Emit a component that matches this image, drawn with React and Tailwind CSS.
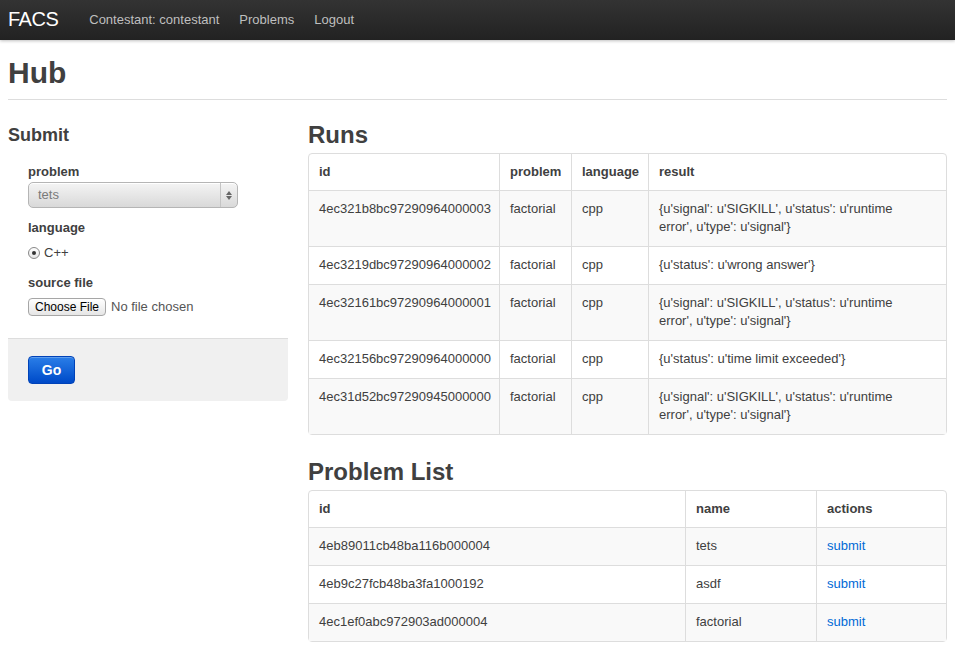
const runs = [
  ["4ec321b8bc97290964000003", "factorial", "cpp", "{u'signal': u'SIGKILL', u'status': u'runtime error', u'type': u'signal'}"],
  ["4ec3219dbc97290964000002", "factorial", "cpp", "{u'status': u'wrong answer'}"],
  ["4ec32161bc97290964000001", "factorial", "cpp", "{u'signal': u'SIGKILL', u'status': u'runtime error', u'type': u'signal'}"],
  ["4ec32156bc97290964000000", "factorial", "cpp", "{u'status': u'time limit exceeded'}"],
  ["4ec31d52bc97290945000000", "factorial", "cpp", "{u'signal': u'SIGKILL', u'status': u'runtime error', u'type': u'signal'}"],
];

const problems = [
  ["4eb89011cb48ba116b000004", "tets"],
  ["4eb9c27fcb48ba3fa1000192", "asdf"],
  ["4ec1ef0abc972903ad000004", "factorial"],
];

const th = "text-left font-bold align-top py-[9px] px-[10px] border-l border-[#ddd] first:border-l-0";
const td = "align-top pt-[9px] pb-[10px] px-[10px] border-t border-l border-[#ddd] first:border-l-0";

function Nav() {
  return (
    <div className="h-10 bg-gradient-to-b from-[#333] to-[#222] shadow-[0_1px_3px_rgba(0,0,0,0.25)] flex items-center px-2">
      <a className="text-white text-[20px] pr-[21px] leading-[20px] -mt-[2px] tracking-[-0.5px]">FACS</a>
      <div className="flex text-[13px] text-[#bfbfbf]">
        <a className="px-[10px]">Contestant: contestant</a>
        <a className="px-[10px]">Problems</a>
        <a className="px-[10px]">Logout</a>
      </div>
    </div>
  );
}

function SubmitForm() {
  return (
    <div className="w-[280px] shrink-0">
      <h3 className="text-[18px] leading-[27px] font-bold mt-[5px]">Submit</h3>
      <div className="pl-5 pt-[14px]">
        <label className="block font-bold leading-[18px]">problem</label>
        <div className="mt-[1px] w-[210px] h-[26px] rounded-[5px] border border-[#b5b5b5] bg-gradient-to-b from-[#f4f4f4] to-[#d9d9d9] flex items-center shadow-[inset_0_1px_0_#fff]">
          <span className="flex-1 pl-[9px] text-[#7a7a7a]">tets</span>
          <div className="w-[17px] h-full border-l border-[#c4c4c4] flex flex-col items-center justify-center gap-[1px]">
            <svg width="6" height="4" viewBox="0 0 6 4"><path d="M0 4 L3 0 L6 4 Z" fill="#666" /></svg>
            <svg width="6" height="4" viewBox="0 0 6 4"><path d="M0 0 L3 4 L6 0 Z" fill="#666" /></svg>
          </div>
        </div>
        <label className="block font-bold leading-[18px] mt-[11px]">language</label>
        <div className="flex items-center mt-[7px] leading-[18px]">
          <span className="w-[12px] h-[12px] rounded-full border border-[#888] bg-gradient-to-b from-[#fff] to-[#e4e4e4] flex items-center justify-center">
            <span className="w-[4px] h-[4px] rounded-full bg-[#333]" />
          </span>
          <span className="ml-[4px]">C++</span>
        </div>
        <label className="block font-bold leading-[18px] mt-[12px]">source file</label>
        <div className="flex items-center mt-[6px] h-[18px]">
          <span className="h-[18px] w-[78px] text-center rounded-[4px] border border-[#a6a6a6] bg-gradient-to-b from-[#fff] to-[#e6e6e6] text-[12px] leading-[16px] text-black">Choose File</span>
          <span className="ml-[5px] text-[#555]">No file chosen</span>
        </div>
      </div>
      <div className="mt-[22px] bg-[#f0f0f0] border-t border-[#ddd] rounded-b-[4px] pt-[17px] pb-[17px] pl-5">
        <button className="h-[28px] w-[47px] rounded-[4px] border border-[#0042b8] bg-gradient-to-b from-[#2a7ee8] to-[#0049c8] text-white font-bold text-[14px] shadow-[inset_0_1px_0_rgba(255,255,255,0.25)]">Go</button>
      </div>
    </div>
  );
}

function Runs() {
  return (
    <div>
      <h2 className="text-[24px] leading-[36px] font-bold">Runs</h2>
      <table className="w-full border-separate border-spacing-0 border border-[#ddd] rounded-[4px] table-fixed">
        <colgroup>
          <col className="w-[190px]" />
          <col className="w-[72px]" />
          <col className="w-[77px]" />
          <col />
        </colgroup>
        <thead>
          <tr>
            <th className={th}>id</th>
            <th className={th}>problem</th>
            <th className={th}>language</th>
            <th className={th}>result</th>
          </tr>
        </thead>
        <tbody>
          {runs.map((r, i) => (
            <tr key={r[0]} className={i % 2 === 0 ? "bg-[#f9f9f9]" : ""}>
              <td className={td}>{r[0]}</td>
              <td className={td}>{r[1]}</td>
              <td className={td}>{r[2]}</td>
              <td className={td}><span className="block max-w-[255px]">{r[3]}</span></td>
            </tr>
          ))}
        </tbody>
      </table>
    </div>
  );
}

function ProblemList() {
  return (
    <div className="mt-[19px]">
      <h2 className="text-[24px] leading-[36px] font-bold">Problem List</h2>
      <table className="w-full border-separate border-spacing-0 border border-[#ddd] rounded-[4px] table-fixed">
        <colgroup>
          <col className="w-[376px]" />
          <col className="w-[131px]" />
          <col />
        </colgroup>
        <thead>
          <tr>
            <th className={th}>id</th>
            <th className={th}>name</th>
            <th className={th}>actions</th>
          </tr>
        </thead>
        <tbody>
          {problems.map((p, i) => (
            <tr key={p[0]} className={i % 2 === 0 ? "bg-[#f9f9f9]" : ""}>
              <td className={td}>{p[0]}</td>
              <td className={td}>{p[1]}</td>
              <td className={td}><a className="text-[#0069d6]">submit</a></td>
            </tr>
          ))}
        </tbody>
      </table>
    </div>
  );
}

export default function App() {
  return (
    <div className="min-h-[648px] bg-white text-[13px] leading-[18px] text-[#404040]" style={{ fontFamily: '"Liberation Sans", Arial, sans-serif' }}>
      <Nav />
      <div className="px-2">
        <div className="pt-[15px] pb-[8px] border-b border-[#ddd] mb-[17px]">
          <h1 className="text-[30px] leading-[36px] font-bold">Hub</h1>
        </div>
        <div className="flex gap-5">
          <SubmitForm />
          <div className="flex-1 min-w-0">
            <Runs />
            <ProblemList />
          </div>
        </div>
      </div>
    </div>
  );
}
